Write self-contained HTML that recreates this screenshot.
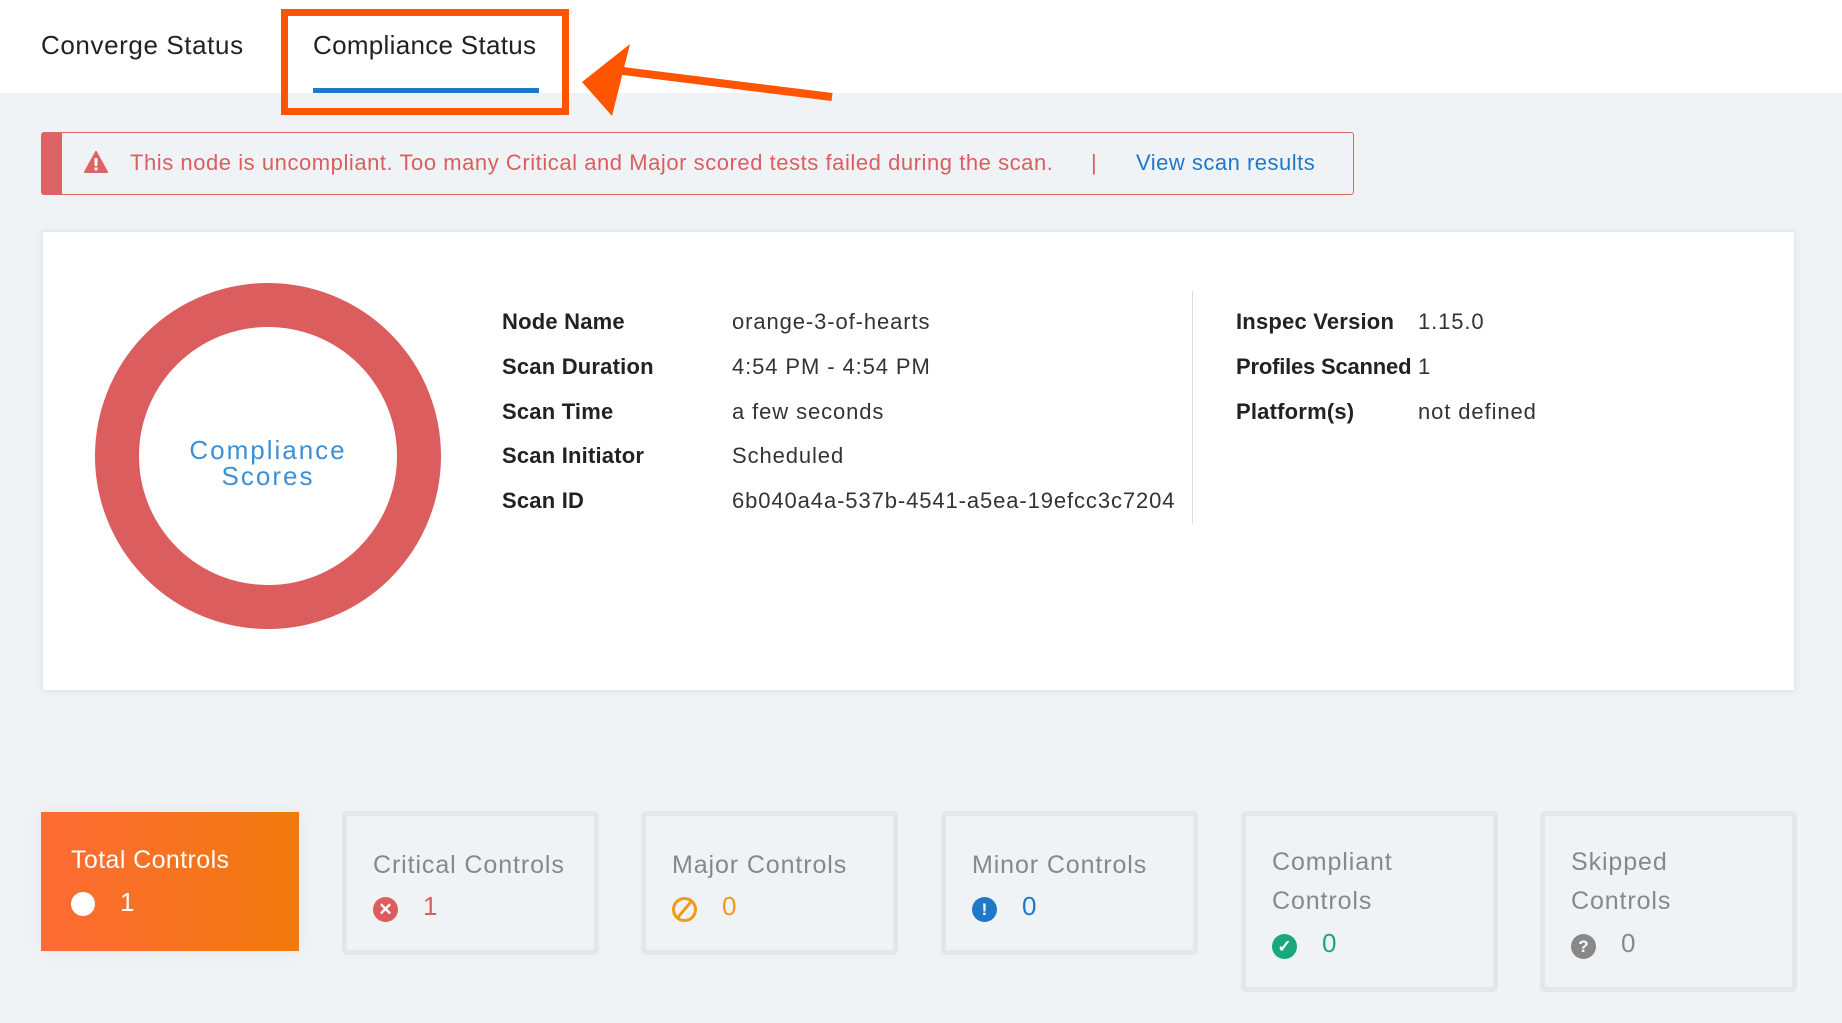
<!DOCTYPE html>
<html><head><meta charset="utf-8"><style>
*{margin:0;padding:0;box-sizing:border-box}
body{width:1842px;height:1023px;background:#eff3f6;font-family:"Liberation Sans",sans-serif;position:relative;overflow:hidden;color:#333}
.a{position:absolute;white-space:nowrap}
.hdr{position:absolute;left:0;top:0;width:1842px;height:93px;background:#fff}
.lbl{font-weight:bold;font-size:22px;letter-spacing:0.2px;color:#222}
.val{font-size:22px;letter-spacing:0.9px;color:#333}
.tile{position:absolute;border:5px solid #e3e7eb;border-radius:5px;background:#eff3f6}
.tile .t{position:absolute;left:26px;font-size:25px;letter-spacing:0.9px;color:#888;line-height:39px}
.tile .n{position:absolute;font-size:26px}
.ic{position:absolute;width:25px;height:25px;border-radius:50%;color:#fff;font-weight:bold;font-size:17px;text-align:center;line-height:25px}
</style></head><body>
<div class="hdr"></div>
<div class="a" style="left:41px;top:30px;font-size:26px;letter-spacing:0.6px;color:#222">Converge Status</div>
<div class="a" style="left:313px;top:30px;font-size:26px;letter-spacing:0.3px;color:#222">Compliance Status</div>
<div class="a" style="left:313px;top:88px;width:226px;height:5px;background:#1f78c8"></div>
<div class="a" style="left:281px;top:9px;width:288px;height:106px;border:7px solid #ff5500"></div>
<svg class="a" style="left:0;top:0" width="1842" height="130">
<line x1="832" y1="97" x2="615" y2="70" stroke="#ff5500" stroke-width="8"/>
<polygon points="582,82 630,44 612,116" fill="#ff5500"/>
</svg>
<div class="a" style="left:41px;top:132px;width:1313px;height:63px;border:1.5px solid #dc6464;border-left:21px solid #dc6464;border-radius:3px"></div>
<svg class="a" style="left:84px;top:151px" width="24" height="22"><polygon points="12,1 23,21 1,21" fill="#dc6464" stroke="#dc6464" stroke-linejoin="round" stroke-width="2"/><rect x="10.6" y="7" width="2.8" height="8" fill="#fff"/><rect x="10.6" y="16.5" width="2.8" height="2.8" fill="#fff"/></svg>
<div class="a" style="left:130px;top:150px;font-size:22px;letter-spacing:0.55px;color:#dc5d5d">This node is uncompliant. Too many Critical and Major scored tests failed during the scan.</div>
<div class="a" style="left:1091px;top:150px;font-size:22px;color:#dc5d5d">|</div>
<div class="a" style="left:1136px;top:150px;font-size:22px;letter-spacing:0.5px;color:#1f78c8">View scan results</div>
<div class="a" style="left:42px;top:231px;width:1753px;height:460px;background:#fff;border:1px solid #e3e7eb;box-shadow:0 0 8px rgba(0,0,0,.06)"></div>
<div class="a" style="left:95px;top:283px;width:346px;height:346px;border-radius:50%;border:44px solid #dc5d5d"></div>
<div class="a" style="left:158px;top:437px;width:220px;text-align:center;font-size:26px;line-height:26px;color:#3d8fd6;letter-spacing:2px;white-space:normal">Compliance Scores</div>
<div class="a lbl" style="left:502px;top:309px">Node Name</div><div class="a val" style="left:732px;top:309px">orange-3-of-hearts</div>
<div class="a lbl" style="left:502px;top:354px">Scan Duration</div><div class="a val" style="left:732px;top:354px">4:54 PM - 4:54 PM</div>
<div class="a lbl" style="left:502px;top:399px">Scan Time</div><div class="a val" style="left:732px;top:399px">a few seconds</div>
<div class="a lbl" style="left:502px;top:443px">Scan Initiator</div><div class="a val" style="left:732px;top:443px">Scheduled</div>
<div class="a lbl" style="left:502px;top:488px">Scan ID</div><div class="a val" style="left:732px;top:488px">6b040a4a-537b-4541-a5ea-19efcc3c7204</div>
<div class="a" style="left:1192px;top:291px;width:1px;height:233px;background:#ddd"></div>
<div class="a lbl" style="left:1236px;top:309px">Inspec Version</div><div class="a val" style="left:1418px;top:309px">1.15.0</div>
<div class="a lbl" style="left:1236px;top:354px;letter-spacing:-0.2px">Profiles Scanned</div><div class="a val" style="left:1418px;top:354px">1</div>
<div class="a lbl" style="left:1236px;top:399px">Platform(s)</div><div class="a val" style="left:1418px;top:399px">not defined</div>

<div class="a" style="left:41px;top:812px;width:258px;height:139px;background:linear-gradient(90deg,#fe6b35,#f07a0c);box-shadow:0 0 20px rgba(0,0,0,.05)">
<div class="a" style="left:30px;top:34px;font-size:25px;letter-spacing:0.4px;color:#fff">Total Controls</div>
<div class="a" style="left:30px;top:80px;width:24px;height:24px;border-radius:50%;background:#fff"></div>
<div class="a" style="left:79px;top:75px;font-size:26px;color:#fff">1</div>
</div>
<div class="tile" style="left:342px;top:811px;width:257px;height:144px">
<div class="t" style="top:30px">Critical Controls</div>
<div class="ic" style="left:26px;top:81px;background:#dc5d5d">✕</div>
<div class="n" style="left:76px;top:75px;color:#dc5d5d">1</div></div>
<div class="tile" style="left:641px;top:811px;width:257px;height:144px">
<div class="t" style="top:30px">Major Controls</div>
<div class="ic" style="left:26px;top:81px;border:3px solid #f29a12;line-height:19px;color:#f29a12"><div style="position:absolute;left:8px;top:-2px;width:3px;height:23px;background:#f29a12;transform:rotate(40deg)"></div></div>
<div class="n" style="left:76px;top:75px;color:#f29a12">0</div></div>
<div class="tile" style="left:941px;top:811px;width:257px;height:144px">
<div class="t" style="top:30px">Minor Controls</div>
<div class="ic" style="left:26px;top:81px;background:#1f78c8">!</div>
<div class="n" style="left:76px;top:75px;color:#1f78c8">0</div></div>
<div class="tile" style="left:1241px;top:811px;width:257px;height:181px">
<div class="t" style="top:27px">Compliant<br>Controls</div>
<div class="ic" style="left:26px;top:118px;background:#1aa779">✓</div>
<div class="n" style="left:76px;top:112px;color:#1aa779">0</div></div>
<div class="tile" style="left:1540px;top:811px;width:257px;height:181px">
<div class="t" style="top:27px">Skipped<br>Controls</div>
<div class="ic" style="left:26px;top:118px;background:#888">?</div>
<div class="n" style="left:76px;top:112px;color:#888">0</div></div>
</body></html>
